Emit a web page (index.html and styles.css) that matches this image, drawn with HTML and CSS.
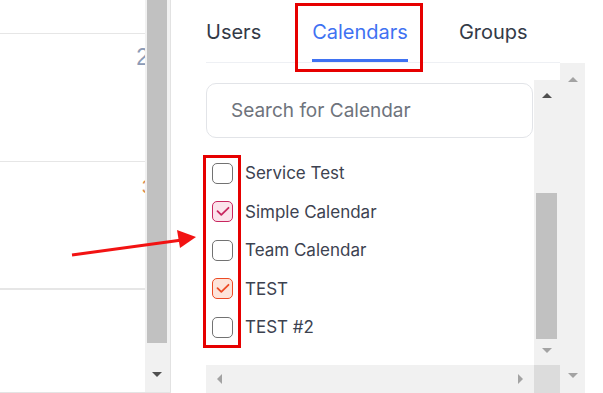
FILE: index.html
```html
<!DOCTYPE html>
<html lang="en">
<head>
    <meta charset="UTF-8">
    <meta name="viewport" content="width=device-width, initial-scale=1.0">
    <title>Calendars picker</title>
    <link rel="stylesheet" href="styles.css">
</head>
<body>
    <div class="screen">
        <!-- left table, clipped by its scrollbar -->
        <div class="left-pane">
            <div class="left-rows">
                <div class="left-row row-head"></div>
                <div class="left-row row-tall"><span class="count count-blue">2</span></div>
                <div class="left-row row-tall"><span class="count count-orange">3</span></div>
                <div class="left-row"></div>
            </div>
            <div class="scrollbar scrollbar-left">
                <div class="thumb thumb-left"></div>
                <div class="arrow-box"><span class="arrow arrow-down dark"></span></div>
            </div>
        </div>

        <div class="spacer"></div>

        <div class="panel">
            <div class="tabs">
                <div class="tab">Users</div>
                <div class="tab tab-active">Calendars</div>
                <div class="tab">Groups</div>
            </div>
            <div class="panel-body">
                <div class="panel-main">
                    <div class="list-area">
                        <div class="list">
                            <div class="search">Search for Calendar</div>
                            <div class="items">
                                <label class="item">
                                    <span class="check"></span>
                                    <span class="item-name">Service Test</span>
                                </label>
                                <label class="item">
                                    <span class="check check-pink">
                                        <svg width="14" height="11" viewBox="0 0 14 11"><path d="M1.5 5.2 L5.3 8.9 L12.5 1.8" fill="none" stroke="#c8265f" stroke-width="1.8" stroke-linecap="round" stroke-linejoin="round"/></svg>
                                    </span>
                                    <span class="item-name">Simple Calendar</span>
                                </label>
                                <label class="item">
                                    <span class="check"></span>
                                    <span class="item-name">Team Calendar</span>
                                </label>
                                <label class="item">
                                    <span class="check check-orange">
                                        <svg width="14" height="11" viewBox="0 0 14 11"><path d="M1.5 5.2 L5.3 8.9 L12.5 1.8" fill="none" stroke="#ec4a24" stroke-width="1.8" stroke-linecap="round" stroke-linejoin="round"/></svg>
                                    </span>
                                    <span class="item-name">TEST</span>
                                </label>
                                <label class="item">
                                    <span class="check"></span>
                                    <span class="item-name">TEST #2</span>
                                </label>
                            </div>
                        </div>
                        <div class="scrollbar scrollbar-inner">
                            <div class="arrow-box arrow-top"><span class="arrow arrow-up dark"></span></div>
                            <div class="thumb thumb-inner"></div>
                            <div class="arrow-box arrow-bottom"><span class="arrow arrow-down"></span></div>
                        </div>
                    </div>
                    <div class="hbar">
                        <div class="hbar-track">
                            <span class="arrow arrow-left"></span>
                            <span class="arrow arrow-right"></span>
                        </div>
                        <div class="corner"></div>
                    </div>
                </div>
                <div class="scrollbar scrollbar-outer">
                    <div class="arrow-box arrow-top"><span class="arrow arrow-up"></span></div>
                    <div class="arrow-box arrow-bottom"><span class="arrow arrow-down"></span></div>
                </div>
            </div>
        </div>

        <!-- red annotations drawn over the screenshot -->
        <div class="mark mark-tab"></div>
        <div class="mark mark-checks"></div>
        <svg class="pointer" width="603" height="393" viewBox="0 0 603 393">
            <line x1="72" y1="255" x2="182" y2="240" stroke="#f21313" stroke-width="3"/>
            <polygon points="196,237 177,230 180,248" fill="#f21313"/>
        </svg>
    </div>
</body>
</html>
```

FILE: styles.css
```css
* {
    margin: 0;
    padding: 0;
    box-sizing: border-box;
}

body {
    font-family: Inter, 'Noto Sans', sans-serif;
    background: #fff;
    width: 603px;
    height: 393px;
    overflow: hidden;
}

.screen {
    position: relative;
    display: flex;
    width: 603px;
    height: 393px;
}

/* left table */
.left-pane {
    display: flex;
    width: 171px;
    height: 393px;
    border-bottom: 1px solid #e4e4e4;
}

.left-rows {
    width: 145px;
    overflow: hidden;
}

.left-row {
    border-bottom: 1px solid #e6e6e6;
    text-align: right;
}

.row-head {
    height: 34px;
}

.row-tall {
    height: 128px;
}

.row-tall:nth-child(3) {
    height: 127px;
}

.count {
    display: inline-block;
    font-family: 'Liberation Sans', sans-serif;
}

.count-blue {
    color: #8c9bb6;
    font-size: 23px;
    margin-top: 10px;
    margin-right: -4px;
}

.count-orange {
    color: #d88a4a;
    font-size: 18px;
    margin-top: 15px;
    margin-right: -7px;
}

/* scrollbars */
.scrollbar {
    display: flex;
    flex-direction: column;
    background: #f1f1f1;
}

.scrollbar-left {
    width: 26px;
    padding: 0 3px 0 2px;
    border-right: 1px solid #e2e2e2;
}

.thumb {
    background: #c1c1c1;
}

.thumb-left {
    height: 343px;
}

.arrow-box {
    display: flex;
    align-items: center;
    justify-content: center;
    flex: 1;
}

.scrollbar-left .arrow-box {
    align-items: flex-end;
    padding-bottom: 15px;
}

.arrow {
    width: 0;
    height: 0;
    display: inline-block;
}

.arrow-down {
    border-left: 5px solid transparent;
    border-right: 5px solid transparent;
    border-top: 5px solid #a3a3a3;
}

.arrow-up {
    border-left: 5px solid transparent;
    border-right: 5px solid transparent;
    border-bottom: 5px solid #a3a3a3;
}

.arrow-left {
    border-top: 5px solid transparent;
    border-bottom: 5px solid transparent;
    border-right: 5px solid #a3a3a3;
}

.arrow-right {
    border-top: 5px solid transparent;
    border-bottom: 5px solid transparent;
    border-left: 5px solid #a3a3a3;
}

.arrow-down.dark {
    border-top-color: #505050;
}

.arrow-up.dark {
    border-bottom-color: #505050;
}

.spacer {
    width: 35px;
}

/* right panel */
.panel {
    width: 379px;
    display: flex;
    flex-direction: column;
}

.tabs {
    display: flex;
    gap: 51px;
    width: 354px;
    height: 63px;
    border-bottom: 1px solid #eef0f4;
}

.tab {
    font-size: 20px;
    color: #333a47;
    padding-top: 20px;
    height: 62px;
}

.tab-active {
    color: #3f72f2;
    border-bottom: 3px solid #3f72f2;
    padding: 20px 0 0;
}

.panel-body {
    display: flex;
    flex: 1;
}

.panel-main {
    width: 354px;
    display: flex;
    flex-direction: column;
    padding-top: 17px;
}

.list-area {
    display: flex;
    height: 285px;
}

.list {
    width: 328px;
    padding-top: 3px;
    overflow: hidden;
}

.search {
    width: 327px;
    height: 55px;
    border: 1px solid #e2e4e8;
    border-radius: 10px;
    padding: 15px 0 0 24px;
    font-size: 19px;
    color: #6e737c;
}

.items {
    margin-top: 16px;
}

.item {
    display: flex;
    align-items: center;
    height: 38.5px;
    padding-left: 6px;
    gap: 12px;
}

.check {
    width: 21px;
    height: 21px;
    border: 1.5px solid #727272;
    border-radius: 5px;
    display: flex;
    align-items: center;
    justify-content: center;
}

.check-pink {
    border-color: #c8265f;
    background: #fbe3eb;
}

.check-orange {
    border-color: #ec4a24;
    background: #fde4da;
}

.item-name {
    font-size: 17px;
    color: #3c4250;
}

.scrollbar-inner {
    width: 26px;
    padding: 0 3px 0 2px;
}

.scrollbar-inner .arrow-top {
    flex: none;
    height: 30px;
}

.thumb-inner {
    margin-top: 83px;
    height: 146px;
}

.scrollbar-inner .arrow-bottom {
    align-items: flex-start;
    padding-top: 9px;
}

.hbar {
    display: flex;
    height: 28px;
}

.hbar-track {
    width: 328px;
    background: #f1f1f1;
    display: flex;
    align-items: center;
    justify-content: space-between;
    padding: 0 11px;
}

.corner {
    width: 26px;
    background: #dcdcdc;
}

.scrollbar-outer {
    width: 25px;
}

.scrollbar-outer .arrow-top {
    flex: none;
    height: 32px;
}

.scrollbar-outer .arrow-bottom {
    align-items: flex-end;
    padding-bottom: 15px;
}

/* annotations */
.mark {
    position: absolute;
    border: 3px solid #e60000;
}

.mark-tab {
    left: 295px;
    top: 3px;
    width: 128px;
    height: 69px;
}

.mark-checks {
    left: 203px;
    top: 155px;
    width: 38px;
    height: 193px;
}

.pointer {
    position: absolute;
    left: 0;
    top: 0;
    pointer-events: none;
}
```
